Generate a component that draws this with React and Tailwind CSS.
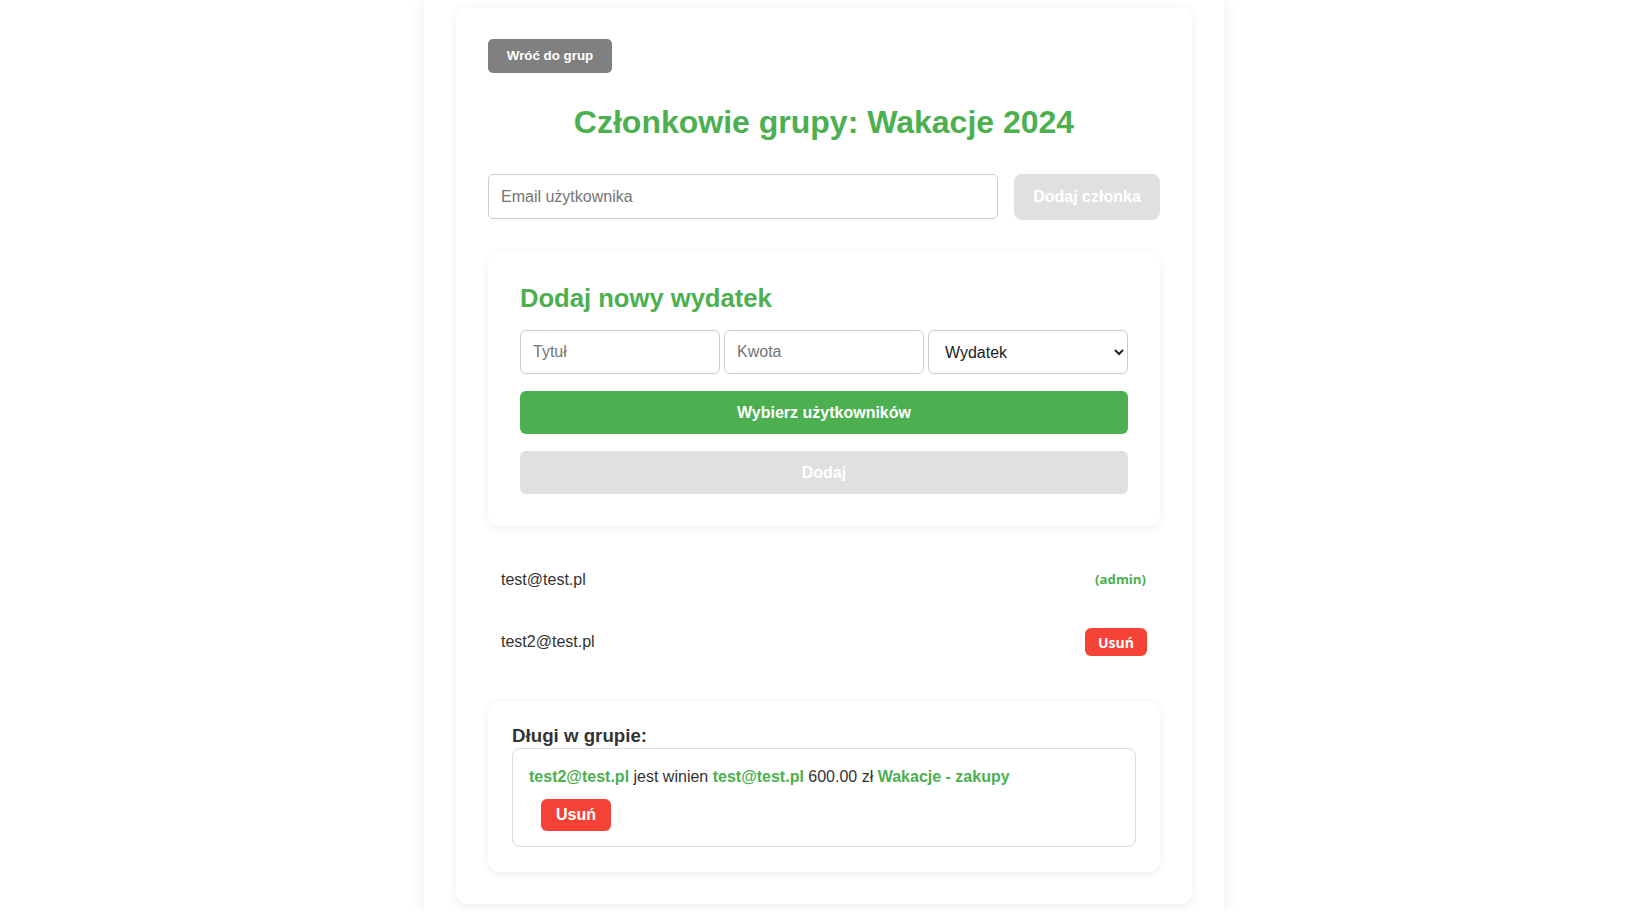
import React from "react";

export default function App() {
  return (
    <div className="min-h-screen bg-white font-['Liberation_Sans',Arial,sans-serif] text-[#333]">
      <div className="overflow-hidden">
        <div className="ml-[calc(50%-402px)] w-[800px] bg-white px-8 py-[7px] shadow-[0_0_16px_rgba(0,0,0,0.09)]">
          <div className="rounded-xl bg-white p-8 shadow-[0_2px_12px_rgba(0,0,0,0.08)]">
            <button className="h-[34px] w-[124px] rounded-[5px] bg-[#808080] text-[13.33px] font-bold text-white">
              Wróć do grup
            </button>
            <h1 className="mt-[31px] mb-[33px] text-center text-[32px] leading-[37px] font-bold text-[#4caf50]">
              Członkowie grupy: Wakacje 2024
            </h1>
            <div className="flex items-start gap-4">
              <input
                placeholder="Email użytkownika"
                className="h-[45px] min-w-0 flex-1 rounded-[5px] border border-[#ccc] bg-white px-3 text-base text-[#333] outline-none placeholder:text-[#757575]"
              />
              <button
                disabled
                className="h-[46px] w-[146px] rounded-lg bg-[#e0e0e0] text-base font-bold text-white"
              >
                Dodaj członka
              </button>
            </div>

            <div className="mt-8 rounded-xl bg-white px-8 pt-8 pb-8 shadow-[0_2px_10px_rgba(0,0,0,0.07)]">
              <h2 className="mb-[18px] text-[25.6px] leading-[28px] font-bold text-[#4caf50]">
                Dodaj nowy wydatek
              </h2>
              <div className="flex gap-1">
                <input
                  placeholder="Tytuł"
                  className="h-[44px] min-w-0 flex-1 rounded-md border border-[#ccc] bg-white px-3 text-base outline-none placeholder:text-[#757575]"
                />
                <input
                  placeholder="Kwota"
                  className="h-[44px] min-w-0 flex-1 rounded-md border border-[#ccc] bg-white px-3 text-base outline-none placeholder:text-[#757575]"
                />
                <select
                  defaultValue="Wydatek"
                  className="h-[44px] min-w-0 flex-1 rounded-md border border-[#ccc] bg-white px-3 text-base text-[#222] outline-none"
                >
                  <option>Wydatek</option>
                  <option>Przychód</option>
                </select>
              </div>
              <button className="mt-[17px] h-[43px] w-full rounded-md bg-[#4caf50] text-base font-bold text-white">
                Wybierz użytkowników
              </button>
              <button
                disabled
                className="mt-[17px] h-[43px] w-full rounded-md bg-[#e0e0e0] text-base font-bold text-white"
              >
                Dodaj
              </button>
            </div>

            <ul className="mt-[22px]">
              <li className="flex h-[62px] items-center justify-between pt-[2px] pr-[14px] pl-[13px] text-base">
                <span>test@test.pl</span>
                <span className="font-['Open_Sans',sans-serif] text-[13.2px] font-bold text-[#4caf50]">
                  (admin)
                </span>
              </li>
              <li className="flex h-[62px] items-center justify-between pt-[2px] pr-[13px] pl-[13px] text-base">
                <span>test2@test.pl</span>
                <button className="h-[28px] w-[62px] rounded-md bg-[#f44336] font-['Open_Sans',sans-serif] text-[14px] font-bold text-white">
                  Usuń
                </button>
              </li>
            </ul>

            <div className="mt-[30px] rounded-xl bg-white px-6 pt-6 pb-[25px] shadow-[0_2px_10px_rgba(0,0,0,0.07)]">
              <h3 className="text-[18.72px] leading-[20px] font-bold text-[#333]">Długi w grupie:</h3>
              <div className="mt-[2px] rounded-lg border border-[#ddd] px-[16px] pt-[16px] pb-[15px]">
                <p className="text-base leading-[24px]">
                  <span className="font-bold text-[#4caf50]">test2@test.pl</span> jest winien{" "}
                  <span className="font-bold text-[#4caf50]">test@test.pl</span> 600.00 zł{" "}
                  <span className="font-bold text-[#4caf50]">Wakacje - zakupy</span>
                </p>
                <button className="mt-[10px] ml-[12px] h-[32px] w-[70px] rounded-md bg-[#f44336] text-base font-bold text-white">
                  Usuń
                </button>
              </div>
            </div>
          </div>
        </div>
      </div>
    </div>
  );
}
